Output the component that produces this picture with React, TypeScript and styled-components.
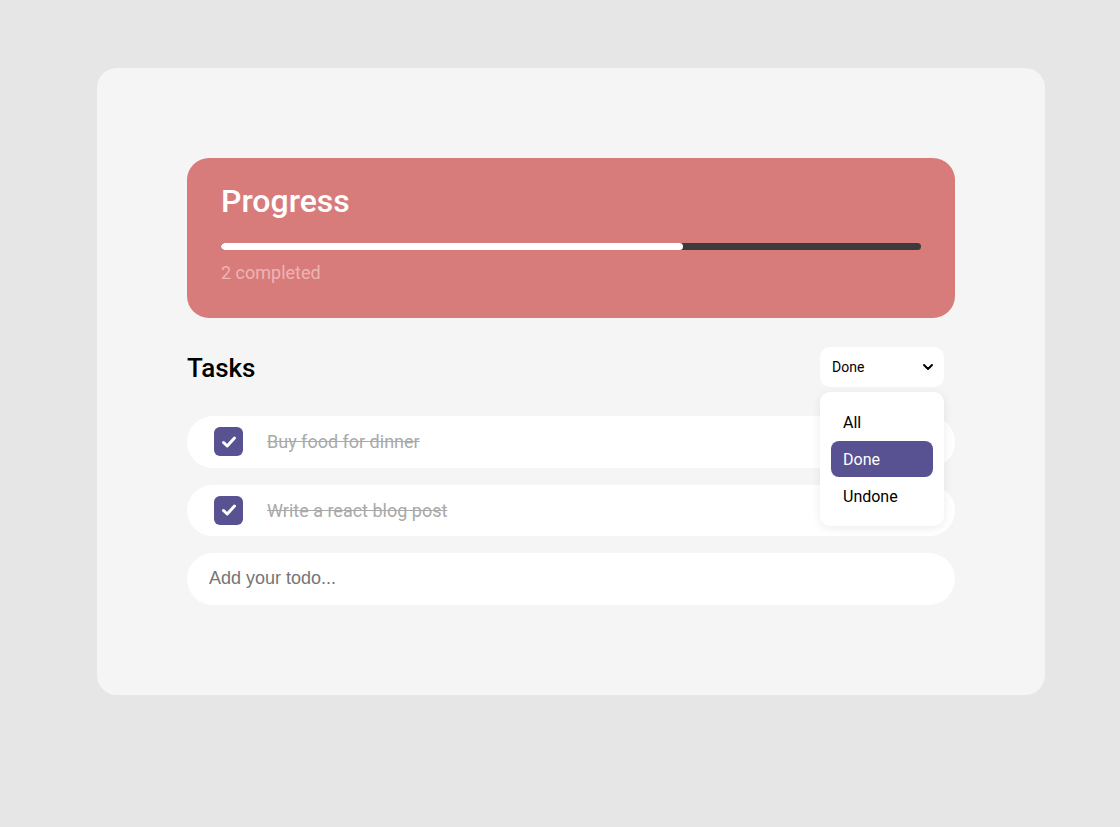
import React, { useState } from 'react';
import styled, { createGlobalStyle } from 'styled-components';

const GlobalStyle = createGlobalStyle`
  html, body {
    margin: 0;
    padding: 0;
    background: #e6e6e6;
    font-family: Roboto, 'Liberation Sans', sans-serif;
  }
`;

const Page = styled.div`
  width: 1120px;
  height: 827px;
  padding: 68px 0 0 22px;
  box-sizing: border-box;
  display: flex;
  justify-content: center;
  align-items: flex-start;
`;

const Card = styled.div`
  width: 948px;
  background: #f5f5f5;
  border-radius: 20px;
  padding: 90px;
  box-sizing: border-box;
  display: flex;
  flex-direction: column;
`;

const ProgressCard = styled.div`
  background: #d87c7b;
  border-radius: 22px;
  padding: 24px 34px 35px;
  display: flex;
  flex-direction: column;
`;

const ProgressTitle = styled.h1`
  margin: 0;
  color: #fff;
  font-size: 32px;
  font-weight: 500;
  line-height: 38px;
`;

const Bar = styled.div`
  margin-top: 23px;
  height: 7px;
  border-radius: 4px;
  background: #3b3b3b;
  overflow: hidden;
`;

const BarFill = styled.div`
  height: 100%;
  background: #fff;
  border-radius: 4px;
`;

const ProgressCaption = styled.div`
  margin-top: 12px;
  color: #edb4b3;
  font-size: 18px;
  line-height: 21px;
`;

const Header = styled.div`
  margin-top: 29px;
  display: flex;
  align-items: center;
  justify-content: space-between;
  padding-right: 11px;
`;

const TasksTitle = styled.h2`
  margin: 0;
  padding-top: 2px;
  font-size: 26px;
  font-weight: 500;
  line-height: 38px;
  color: #000;
`;

const SelectWrap = styled.div`
  position: relative;
  width: 124px;
`;

const SelectButton = styled.button`
  width: 100%;
  height: 40px;
  border: none;
  border-radius: 10px;
  background: #fff;
  padding: 0 10px 0 12px;
  display: flex;
  align-items: center;
  justify-content: space-between;
  font-family: Roboto, 'Liberation Sans', sans-serif;
  font-size: 14px;
  color: #000;
  cursor: pointer;
`;

const Menu = styled.div`
  position: absolute;
  top: 45px;
  left: 0;
  width: 100%;
  background: #fff;
  border-radius: 10px;
  box-shadow: 0 2px 10px rgba(0, 0, 0, 0.08);
  padding: 12px 11px;
  box-sizing: border-box;
  z-index: 2;
  display: flex;
  flex-direction: column;
  gap: 1px;
`;

const MenuItem = styled.div<{ $active?: boolean }>`
  height: 36px;
  border-radius: 8px;
  padding: 0 12px;
  display: flex;
  align-items: center;
  font-size: 16px;
  background: ${(p) => (p.$active ? '#585292' : 'transparent')};
  color: ${(p) => (p.$active ? '#fff' : '#000')};
  cursor: pointer;
`;

const List = styled.div`
  margin-top: 29px;
  display: flex;
  flex-direction: column;
  gap: 17px;
`;

const TaskRow = styled.div`
  height: 51.5px;
  background: #fff;
  border-radius: 26px;
  display: flex;
  align-items: center;
  padding: 0 27px;
  gap: 24px;
`;

const Check = styled.div<{ $checked: boolean }>`
  width: 29px;
  height: 29px;
  border-radius: 6px;
  background: ${(p) => (p.$checked ? '#585292' : '#fff')};
  border: ${(p) => (p.$checked ? 'none' : '2px solid #585292')};
  box-sizing: border-box;
  display: flex;
  align-items: center;
  justify-content: center;
`;

const TaskText = styled.span<{ $done: boolean }>`
  font-size: 18px;
  color: ${(p) => (p.$done ? '#a9a9a9' : '#000')};
  text-decoration: ${(p) => (p.$done ? 'line-through' : 'none')};
`;

const TodoInput = styled.input`
  height: 51.5px;
  border: none;
  border-radius: 26px;
  background: #fff;
  padding: 0 22px;
  font-family: 'Liberation Sans', Arial, sans-serif;
  font-size: 18px;
  outline: none;
  &::placeholder {
    color: #757575;
  }
`;

const CheckIcon = () => (
  <svg width="18" height="18" viewBox="0 0 18 18" fill="none">
    <path d="M3.5 9.5L7.2 13L14.5 5" stroke="#fff" strokeWidth="3" strokeLinecap="round" strokeLinejoin="round" />
  </svg>
);

const Chevron = () => (
  <svg width="12" height="12" viewBox="0 0 12 12" fill="none">
    <path d="M2 4L6 8L10 4" stroke="#000" strokeWidth="2" strokeLinecap="round" strokeLinejoin="round" />
  </svg>
);

const tasks = [
  { id: 1, title: 'Buy food for dinner', done: true },
  { id: 2, title: 'Write a react blog post', done: true },
];

const options = ['All', 'Done', 'Undone'];

export default function App() {
  const [filter, setFilter] = useState('Done');
  const [open, setOpen] = useState(true);
  const completed = tasks.filter((t) => t.done).length;

  return (
    <>
      <GlobalStyle />
      <Page>
        <Card>
          <ProgressCard>
            <ProgressTitle>Progress</ProgressTitle>
            <Bar>
              <BarFill style={{ width: '66%' }} />
            </Bar>
            <ProgressCaption>{completed} completed</ProgressCaption>
          </ProgressCard>

          <Header>
            <TasksTitle>Tasks</TasksTitle>
            <SelectWrap>
              <SelectButton onClick={() => setOpen(!open)}>
                {filter}
                <Chevron />
              </SelectButton>
              {open && (
                <Menu>
                  {options.map((o) => (
                    <MenuItem key={o} $active={o === filter} onClick={() => setFilter(o)}>
                      {o}
                    </MenuItem>
                  ))}
                </Menu>
              )}
            </SelectWrap>
          </Header>

          <List>
            {tasks.map((t) => (
              <TaskRow key={t.id}>
                <Check $checked={t.done}>{t.done && <CheckIcon />}</Check>
                <TaskText $done={t.done}>{t.title}</TaskText>
              </TaskRow>
            ))}
            <TodoInput placeholder="Add your todo..." />
          </List>
        </Card>
      </Page>
    </>
  );
}
